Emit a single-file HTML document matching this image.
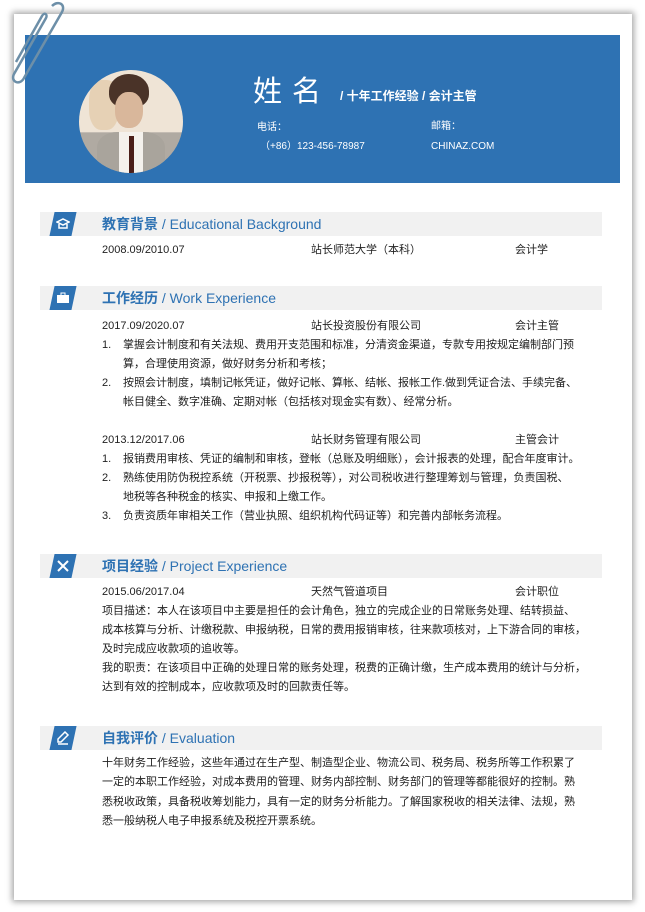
<!DOCTYPE html>
<html><head><meta charset="utf-8"><style>
*{margin:0;padding:0;box-sizing:border-box}
body{width:645px;height:912px;background:#fff;position:relative;overflow:hidden;font-family:"Liberation Sans","Noto Sans CJK SC",sans-serif;color:#222}
.paper{position:absolute;left:14px;top:14px;width:618px;height:886px;background:#fff;box-shadow:0 0 6px 2px rgba(0,0,0,.35)}
.hdr{position:absolute;left:25px;top:35px;width:595px;height:148px;background:#2e72b3}
.photo{position:absolute;left:79px;top:70px;width:104px;height:103px;border-radius:50%;background:linear-gradient(180deg,#efe4d6 0 60%,#b0aaa2 61%);overflow:hidden}
.photo i{position:absolute;display:block}
.t{position:absolute;white-space:nowrap;font-size:11px;line-height:14px}
.w{color:#fff}
.bar{position:absolute;left:40px;width:562px;height:24px;background:#f1f1f1}
.ic{position:absolute;left:12px;top:0;width:22px;height:24px;background:#2e72b3;transform:skewX(-12deg)}
.ic svg{position:absolute;left:4px;top:5px;transform:skewX(12deg)}
.bt{position:absolute;left:62px;top:3px;font-size:14px;line-height:18px;color:#2e72b3;white-space:nowrap}
.bt b{font-weight:bold}
</style></head><body>
<div class="paper"></div>
<div class="hdr"></div>
<div class="photo">
<i style="left:10px;top:10px;width:30px;height:50px;background:#e3c9a6;border-radius:40%;opacity:.7"></i>
<i style="left:30px;top:4px;width:40px;height:34px;background:#4a3328;border-radius:50% 50% 40% 40%"></i>
<i style="left:36px;top:22px;width:28px;height:36px;background:#d9b79b;border-radius:45%"></i>
<i style="left:18px;top:62px;width:68px;height:50px;background:#a9a49c;border-radius:30% 30% 0 0"></i>
<i style="left:40px;top:62px;width:24px;height:45px;background:#f4f1ec"></i>
<i style="left:50px;top:66px;width:5px;height:40px;background:#4a1e18"></i>
</div>
<div class="t w" style="left:253px;top:76px;font-size:29px;line-height:32px;letter-spacing:10px">姓名</div>
<div class="t w" style="left:340px;top:89px;font-size:12px;font-weight:bold">/ 十年工作经验 / 会计主管</div>
<div class="t w" style="left:257px;top:121px;font-size:10px">电话：</div>
<div class="t w" style="left:260px;top:140px;font-size:10px">（+86）123-456-78987</div>
<div class="t w" style="left:431px;top:120px;font-size:10px">邮箱：</div>
<div class="t w" style="left:431px;top:140px;font-size:10px">CHINAZ.COM</div>

<div class="bar" style="top:212px"><div class="ic"><svg width="14" height="14" viewBox="0 0 14 14"><path d="M1 5 7 2 13 5 7 8Z M3 7v4h8V7" fill="none" stroke="#fff" stroke-width="1.5"/></svg></div><div class="bt"><b>教育背景</b> / Educational Background</div></div>
<div class="t" style="left:102px;top:243px">2008.09/2010.07</div>
<div class="t" style="left:311px;top:243px">站长师范大学（本科）</div>
<div class="t" style="left:515px;top:243px">会计学</div>

<div class="bar" style="top:286px"><div class="ic"><svg width="14" height="14" viewBox="0 0 14 14"><rect x="1" y="4" width="12" height="8" fill="#fff"/><rect x="5" y="2" width="4" height="3" fill="none" stroke="#fff"/></svg></div><div class="bt"><b>工作经历</b> / Work Experience</div></div>
<div class="t" style="left:102px;top:319px">2017.09/2020.07</div>
<div class="t" style="left:311px;top:319px">站长投资股份有限公司</div>
<div class="t" style="left:515px;top:319px">会计主管</div>
<div class="t" style="left:102px;top:338px">1.</div><div class="t" style="left:123px;top:338px">掌握会计制度和有关法规、费用开支范围和标准，分清资金渠道，专款专用按规定编制部门预</div>
<div class="t" style="left:123px;top:357px">算，合理使用资源，做好财务分析和考核；</div>
<div class="t" style="left:102px;top:376px">2.</div><div class="t" style="left:123px;top:376px">按照会计制度，填制记帐凭证，做好记帐、算帐、结帐、报帐工作.做到凭证合法、手续完备、</div>
<div class="t" style="left:123px;top:395px">帐目健全、数字准确、定期对帐（包括核对现金实有数）、经常分析。</div>
<div class="t" style="left:102px;top:433px">2013.12/2017.06</div>
<div class="t" style="left:311px;top:433px">站长财务管理有限公司</div>
<div class="t" style="left:515px;top:433px">主管会计</div>
<div class="t" style="left:102px;top:452px">1.</div><div class="t" style="left:123px;top:452px">报销费用审核、凭证的编制和审核，登帐（总账及明细账），会计报表的处理，配合年度审计。</div>
<div class="t" style="left:102px;top:471px">2.</div><div class="t" style="left:123px;top:471px">熟练使用防伪税控系统（开税票、抄报税等），对公司税收进行整理筹划与管理，负责国税、</div>
<div class="t" style="left:123px;top:490px">地税等各种税金的核实、申报和上缴工作。</div>
<div class="t" style="left:102px;top:509px">3.</div><div class="t" style="left:123px;top:509px">负责资质年审相关工作（营业执照、组织机构代码证等）和完善内部帐务流程。</div>

<div class="bar" style="top:554px"><div class="ic"><svg width="14" height="14" viewBox="0 0 14 14"><path d="M2 2 12 12 M12 2 2 12" stroke="#fff" stroke-width="2"/></svg></div><div class="bt"><b>项目经验</b> / Project Experience</div></div>
<div class="t" style="left:102px;top:585px">2015.06/2017.04</div>
<div class="t" style="left:311px;top:585px">天然气管道项目</div>
<div class="t" style="left:515px;top:585px">会计职位</div>
<div class="t" style="left:102px;top:604px">项目描述：本人在该项目中主要是担任的会计角色，独立的完成企业的日常账务处理、结转损益、</div>
<div class="t" style="left:102px;top:623px">成本核算与分析、计缴税款、申报纳税，日常的费用报销审核，往来款项核对，上下游合同的审核，</div>
<div class="t" style="left:102px;top:642px">及时完成应收款项的追收等。</div>
<div class="t" style="left:102px;top:661px">我的职责：在该项目中正确的处理日常的账务处理，税费的正确计缴，生产成本费用的统计与分析，</div>
<div class="t" style="left:102px;top:680px">达到有效的控制成本，应收款项及时的回款责任等。</div>

<div class="bar" style="top:726px"><div class="ic"><svg width="14" height="14" viewBox="0 0 14 14"><path d="M9 1 12 4 5 11 2 11 2 8Z M2 13h10" fill="none" stroke="#fff" stroke-width="1.5"/></svg></div><div class="bt"><b>自我评价</b> / Evaluation</div></div>
<div class="t" style="left:102px;top:756px">十年财务工作经验，这些年通过在生产型、制造型企业、物流公司、税务局、税务所等工作积累了</div>
<div class="t" style="left:102px;top:775px">一定的本职工作经验，对成本费用的管理、财务内部控制、财务部门的管理等都能很好的控制。熟</div>
<div class="t" style="left:102px;top:795px">悉税收政策，具备税收筹划能力，具有一定的财务分析能力。了解国家税收的相关法律、法规，熟</div>
<div class="t" style="left:102px;top:814px">悉一般纳税人电子申报系统及税控开票系统。</div>

<svg style="position:absolute;left:0;top:0" width="80" height="90" viewBox="0 0 80 90"><path d="M52 6 C58 0 66 4 62 12 L24 78 C20 86 10 82 14 74 L46 18 C48 14 44 12 42 16 L16 62" fill="none" stroke="#6d8fa8" stroke-width="2.5"/></svg>
</body></html>
